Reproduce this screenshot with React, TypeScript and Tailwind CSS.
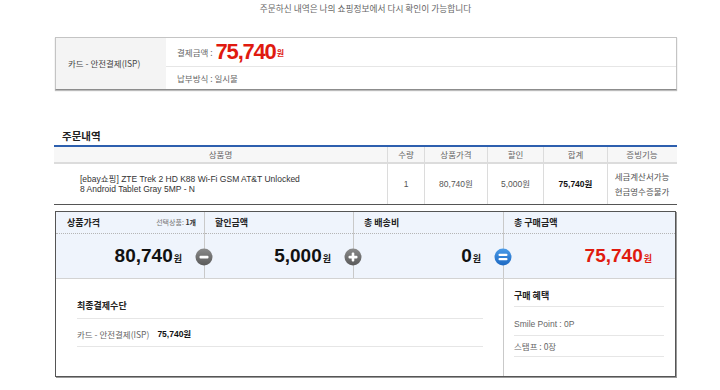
import React from "react";

const KR = "font-['Noto_Sans_CJK_KR',sans-serif]";
const MIX = "font-['Liberation_Sans','Noto_Sans_CJK_KR',sans-serif]";

function CircleIcon({ kind }: { kind: "minus" | "plus" | "equals" }) {
  const blue = kind === "equals";
  const id = "g-" + kind;
  return (
    <svg width="18" height="18" viewBox="0 0 18 18">
      <defs>
        <linearGradient id={id} x1="0" y1="0" x2="0" y2="1">
          <stop offset="0" stopColor={blue ? "#4a9be8" : "#8a8a8a"} />
          <stop offset="1" stopColor={blue ? "#1d68c2" : "#5a5a5a"} />
        </linearGradient>
      </defs>
      <circle cx="9" cy="9" r="8.5" fill={`url(#${id})`} />
      {kind === "minus" && <rect x="4.5" y="7.8" width="9" height="2.6" rx="1" fill="#fff" />}
      {kind === "plus" && (
        <>
          <rect x="4.5" y="7.8" width="9" height="2.6" rx="1" fill="#fff" />
          <rect x="7.7" y="4.6" width="2.6" height="9" rx="1" fill="#fff" />
        </>
      )}
      {kind === "equals" && (
        <>
          <rect x="4.5" y="5.8" width="9" height="2.3" rx="1" fill="#fff" />
          <rect x="4.5" y="10" width="9" height="2.3" rx="1" fill="#fff" />
        </>
      )}
    </svg>
  );
}

function Amount({ value, red }: { value: string; red?: boolean }) {
  return (
    <span className={`flex items-baseline ${red ? "text-[#e01a0f]" : "text-[#111]"}`}>
      <span className="font-['Liberation_Sans',sans-serif] font-bold text-[19px] leading-none">{value}</span>
      <span className={`${KR} font-bold text-[9px] ml-[1px]`}>원</span>
    </span>
  );
}

export default function App() {
  return (
    <div className={`w-[720px] h-[390px] bg-white overflow-hidden ${KR}`}>
      <div className="ml-[54px] w-[623px]">
        <p className="h-[17px] leading-[17px] text-center text-[8.7px] text-[#666]">
          주문하신 내역은 나의 쇼핑정보에서 다시 확인이 가능합니다
        </p>

        {/* payment box */}
        <div className="mt-[20px] ml-[1px] w-[622px] h-[53px] flex border border-[#c4c4c4] border-b-[#8c8c8c] shadow-[0_1px_1px_#bbb]">
          <div className="w-[110px] bg-[#f4f4f4] flex items-center pl-[12px] text-[8.5px] text-[#444]">
            카드 - 안전결제(ISP)
          </div>
          <div className="flex-1 flex flex-col">
            <div className="h-[29px] flex items-center pl-[11px] border-b border-[#e6e6e6]">
              <span className="text-[8.5px] text-[#666] mr-[3px]">결제금액 :</span>
              <span className="font-['Liberation_Sans_Narrow','Liberation_Sans',sans-serif] font-bold text-[22px] tracking-[-1.2px] leading-none text-[#e01a0f]">
                75,740
              </span>
              <span className="text-[8px] font-bold text-[#e01a0f] self-end mb-[7px] ml-[1px]">원</span>
            </div>
            <div className="flex-1 flex items-center pl-[11px] text-[8.5px] text-[#666]">납부방식 : 일시불</div>
          </div>
        </div>

        {/* order list */}
        <div className="mt-[38px] h-[16px] leading-[16px] pl-[8px] text-[10.5px] font-bold text-[#222]">주문내역</div>
        <div className="mt-[1px] border-t-2 border-[#2d5fae]">
          <div className="grid grid-cols-[333px_37px_63px_56px_64px_69px] h-[17px] bg-[#f7f7f7] border-b-2 border-[#dcdcdc] text-[8.5px] text-[#666]">
            <div className="flex items-center justify-center">상품명</div>
            <div className="flex items-center justify-center border-l border-[#dcdcdc]">수량</div>
            <div className="flex items-center justify-center border-l border-[#dcdcdc]">상품가격</div>
            <div className="flex items-center justify-center border-l border-[#dcdcdc]">할인</div>
            <div className="flex items-center justify-center border-l border-[#dcdcdc]">합계</div>
            <div className="flex items-center justify-center border-l border-[#dcdcdc]">증빙기능</div>
          </div>
          <div className={`grid grid-cols-[333px_37px_63px_56px_64px_69px] h-[41px] border-b border-[#555] text-[8.5px] text-[#555] ${MIX}`}>
            <div className="flex flex-col justify-center pl-[26px] leading-[10px] text-[#333]">
              <span>[ebay쇼핑] ZTE Trek 2 HD K88 Wi-Fi GSM AT&amp;T Unlocked</span>
              <span>8 Android Tablet Gray 5MP - N</span>
            </div>
            <div className="flex items-center justify-center border-l border-[#dcdcdc]">1</div>
            <div className="flex items-center justify-center border-l border-[#dcdcdc]">80,740원</div>
            <div className="flex items-center justify-center border-l border-[#dcdcdc]">5,000원</div>
            <div className="flex items-center justify-center border-l border-[#dcdcdc] font-bold text-[#111]">75,740원</div>
            <div className={`flex flex-col justify-center items-center border-l border-[#dcdcdc] leading-[15px] ${KR}`}>
              <span>세금계산서가능</span>
              <span>현금영수증불가</span>
            </div>
          </div>
        </div>

        {/* summary box */}
        <div className="mt-[6px] ml-[1px] w-[621px] border border-[#555] shadow-[1px_1px_0_#999]">
          <div className="grid grid-cols-[148px_149px_150px_1fr] bg-[#eff4fc] border-b border-[#d3d3d3]">
            <div className="flex flex-col">
              <div className="h-[22px] flex items-center justify-between pl-[11px] pr-[8px] border-b border-dotted border-[#b5b5b5]">
                <span className="text-[9px] font-bold text-[#222]">상품가격</span>
                <span className="text-[7px] text-[#777]">
                  선택상품: <b className="text-[#333]">1개</b>
                </span>
              </div>
              <div className="h-[44px] flex items-center justify-end pr-[22px]">
                <Amount value="80,740" />
              </div>
            </div>
            <div className="relative flex flex-col border-l border-[#c9c9c9]">
              <div className="h-[22px] flex items-center pl-[10px] border-b border-dotted border-[#b5b5b5]">
                <span className="text-[9px] font-bold text-[#222]">할인금액</span>
              </div>
              <div className="h-[44px] flex items-center justify-end pr-[22px]">
                <Amount value="5,000" />
              </div>
              <div className="absolute left-[-10px] top-[36px]">
                <CircleIcon kind="minus" />
              </div>
            </div>
            <div className="relative flex flex-col border-l border-[#c9c9c9]">
              <div className="h-[22px] flex items-center pl-[10px] border-b border-dotted border-[#b5b5b5]">
                <span className="text-[9px] font-bold text-[#222]">총 배송비</span>
              </div>
              <div className="h-[44px] flex items-center justify-end pr-[22px]">
                <Amount value="0" />
              </div>
              <div className="absolute left-[-10px] top-[36px]">
                <CircleIcon kind="plus" />
              </div>
            </div>
            <div className="relative flex flex-col border-l border-[#c9c9c9]">
              <div className="h-[22px] flex items-center pl-[10px] border-b border-dotted border-[#b5b5b5]">
                <span className="text-[9px] font-bold text-[#222]">총 구매금액</span>
              </div>
              <div className="h-[44px] flex items-center justify-end pr-[23px]">
                <Amount value="75,740" red />
              </div>
              <div className="absolute left-[-10px] top-[36px]">
                <CircleIcon kind="equals" />
              </div>
            </div>
          </div>

          <div className="grid grid-cols-[447px_1fr] h-[97px]">
            <div className="pt-[19px] pl-[21px] pr-[20px]">
              <div className="h-[21px] flex items-center pb-[4px] border-b border-[#e6e6e6] text-[9px] font-bold text-[#222]">
                최종결제수단
              </div>
              <div className="h-[28px] flex items-center pt-[4px] border-b border-[#e6e6e6] text-[8.5px] text-[#666]">
                <span>카드 - 안전결제(ISP)</span>
                <span className="ml-[8px] font-['Liberation_Sans','Noto_Sans_CJK_KR',sans-serif] font-bold text-[#111]">75,740원</span>
              </div>
            </div>
            <div className="border-l border-[#c9c9c9] pl-[10px] pr-[11px]">
              <div className="h-[28px] flex items-center pt-[6px] border-b border-[#e6e6e6] text-[9px] font-bold text-[#222]">
                구매 혜택
              </div>
              <div className={`h-[29px] flex items-center pt-[6px] border-b border-[#e6e6e6] text-[8.5px] text-[#666] ${MIX}`}>
                Smile Point : 0P
              </div>
              <div className="h-[21px] flex items-center border-b border-[#e6e6e6] text-[8.5px] text-[#666]">
                스탬프 : 0장
              </div>
            </div>
          </div>
        </div>
      </div>
    </div>
  );
}
